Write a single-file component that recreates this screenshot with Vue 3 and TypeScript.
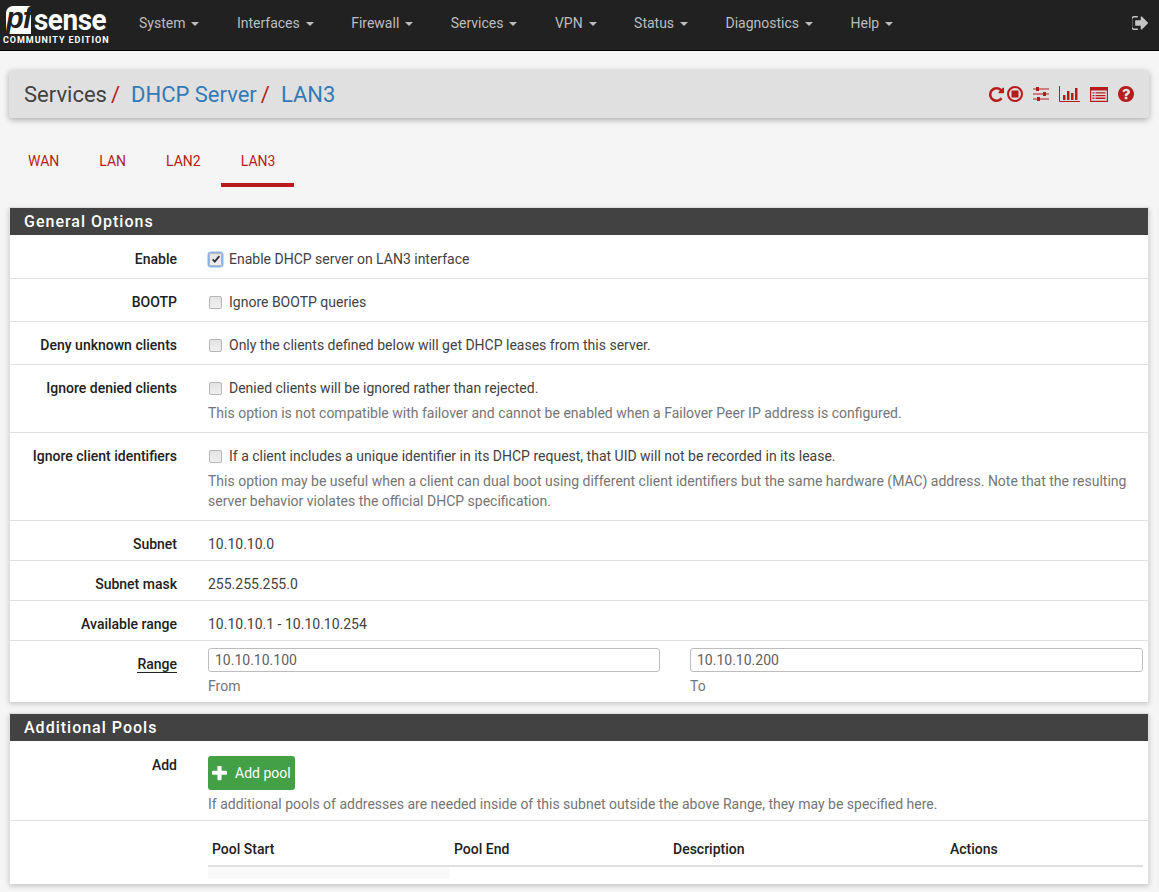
<script setup lang="ts">
const menu = ['System', 'Interfaces', 'Firewall', 'Services', 'VPN', 'Status', 'Diagnostics', 'Help'];
const tabs = ['WAN', 'LAN', 'LAN2', 'LAN3'];

const checks = [
  { label: 'Enable', text: 'Enable DHCP server on LAN3 interface', checked: true, help: '' },
  { label: 'BOOTP', text: 'Ignore BOOTP queries', checked: false, help: '' },
  { label: 'Deny unknown clients', text: 'Only the clients defined below will get DHCP leases from this server.', checked: false, help: '' },
  {
    label: 'Ignore denied clients',
    text: 'Denied clients will be ignored rather than rejected.',
    checked: false,
    help: 'This option is not compatible with failover and cannot be enabled when a Failover Peer IP address is configured.',
  },
  {
    label: 'Ignore client identifiers',
    text: 'If a client includes a unique identifier in its DHCP request, that UID will not be recorded in its lease.',
    checked: false,
    help: 'This option may be useful when a client can dual boot using different client identifiers but the same hardware (MAC) address. Note that the resulting server behavior violates the official DHCP specification.',
  },
];

const statics = [
  { label: 'Subnet', value: '10.10.10.0' },
  { label: 'Subnet mask', value: '255.255.255.0' },
  { label: 'Available range', value: '10.10.10.1 - 10.10.10.254' },
];
</script>

<template>
  <div class="page">
    <nav class="navbar">
      <a class="logo">
        <span class="logo-top"><span class="logo-pf">pf</span><span class="logo-sense">sense</span></span>
        <span class="logo-sub">COMMUNITY EDITION</span>
      </a>
      <ul class="menu">
        <li v-for="item in menu" :key="item">{{ item }}<i class="caret"></i></li>
      </ul>
      <svg class="signout" viewBox="160 256 1472 1280" width="16" height="14">
        <path d="M704 1440q0 4 1 20t.5 26.500-3 23.500-10 19.500-20.500 6.500h-320q-119 0-203.500-84.500t-84.500-203.500v-704q0-119 84.500-203.500t203.500-84.500h320q13 0 22.500 9.500t9.500 22.500q0 4 1 20t.5 26.500-3 23.500-10 19.500-20.500 6.500h-320q-66 0-113 47t-47 113v704q0 66 47 113t113 47h312l11.500 1 11.500 3 8 5.500 7 9 2 13.500zm928-544q0 26-19 45l-544 544q-19 19-45 19t-45-19-19-45v-288h-448q-26 0-45-19t-19-45v-384q0-26 19-45t45-19h448v-288q0-26 19-45t45-19 45 19l544 544q19 19 19 45z" fill="#c4c4c4" />
      </svg>
    </nav>

    <div class="crumbs">
      <h1>
        <span>Services</span><em>/</em><a>DHCP Server</a><em>/</em><a>LAN3</a>
      </h1>
      <div class="tools">
        <svg viewBox="128 128 1536 1536" width="15" height="15">
          <path d="M1664 256v448q0 26-19 45t-45 19h-448q-42 0-59-40-17-39 14-69l138-138q-148-137-349-137-104 0-198.500 40.500t-163.500 109.500-109.500 163.500-40.500 198.500 40.500 198.500 109.500 163.500 163.500 109.500 198.500 40.500q119 0 225-52t179-147q7-10 23-12 15 0 25 9l137 138q9 8 9.500 20.500t-7.500 22.500q-109 132-264 204.500t-327 72.500q-156 0-298-61t-245-164-164-245-61-298 61-298 164-245 245-164 298-61q147 0 284.500 55.500t244.500 156.500l130-129q29-31 70-14 39 17 39 59z" fill="#b71c1c" />
        </svg>
        <svg viewBox="0 0 16 16" width="16" height="16">
          <circle cx="8" cy="8" r="7" fill="none" stroke="#b71c1c" stroke-width="2" />
          <rect x="4.500" y="4.500" width="7" height="7" fill="#b71c1c" />
        </svg>
        <svg class="gap" viewBox="0 0 16 16" width="16" height="16">
          <path d="M0 3h16M0 8h16M0 13h16" stroke="#b71c1c" stroke-width="1.200" />
          <path d="M3 1h3v4H3zM10 6h3v4h-3zM4 11h3v4H4z" fill="#b71c1c" />
        </svg>
        <svg class="gap" viewBox="0 0 21 16" width="21" height="16">
          <path d="M.5 0v15.500H21" fill="none" stroke="#b71c1c" stroke-width="1" />
          <path d="M4 9h2.500v5H4zM8 5h2.500v9H8zM12 7h2.500v7H12zM16 2h2.500v12H16z" fill="#b71c1c" />
        </svg>
        <svg class="gap" viewBox="0 0 18 15" width="18" height="15">
          <path fill-rule="evenodd" d="M0 0h18v15H0zM1.200 3.500v10.300h15.600V3.500z" fill="#b71c1c" />
          <path d="M2.500 5.200h2v1.400h-2zM5.500 5.200h10v1.400h-10zM2.500 7.900h2v1.400h-2zM5.500 7.900h10v1.400h-10zM2.500 10.600h2V12h-2zM5.500 10.600h10V12h-10z" fill="#b71c1c" />
        </svg>
        <svg class="gap" viewBox="128 128 1536 1536" width="16" height="16">
          <path d="M1024 1376v-192q0-14-9-23t-23-9h-192q-14 0-23 9t-9 23v192q0 14 9 23t23 9h192q14 0 23-9t9-23zm256-672q0-88-55.500-163t-138.500-116-170-41q-243 0-371 213-15 24 8 42l132 100q7 6 19 6 16 0 25-12 53-68 86-92 34-24 86-24 48 0 85.500 26t37.500 59q0 38-20 61t-68 45q-63 28-115.500 86.500t-52.500 125.500v36q0 14 9 23t23 9h192q14 0 23-9t9-23q0-19 21.500-49.500t54.500-49.500q32-18 49-28.500t46-35 44.500-48 28-60.500 12.500-81zm384 192q0 209-103 385.500t-279.500 279.500-385.500 103-385.500-103-279.500-279.500-103-385.500 103-385.500 279.500-279.500 385.500-103 385.500 103 279.500 279.500 103 385.500z" fill="#b71c1c" />
        </svg>
      </div>
    </div>

    <ul class="tabs">
      <li v-for="tab in tabs" :key="tab" :class="{ active: tab === 'LAN3' }">{{ tab }}</li>
    </ul>

    <section class="panel">
      <h2>General Options</h2>
      <div v-for="(row, i) in checks" :key="row.label" class="row" :class="{ first: i === 0 }">
        <label class="lbl">{{ row.label }}</label>
        <div class="val">
          <div class="check-line">
            <span class="box" :class="{ on: row.checked }">
              <svg v-if="row.checked" viewBox="0 0 12 12" width="10" height="10">
                <path d="M2 6.500l2.500 2.700L10 2.500" fill="none" stroke="#333" stroke-width="2.200" />
              </svg>
            </span>
            <span>{{ row.text }}</span>
          </div>
          <p v-if="row.help" class="help">{{ row.help }}</p>
        </div>
      </div>
      <div v-for="row in statics" :key="row.label" class="row static">
        <label class="lbl">{{ row.label }}</label>
        <div class="val">{{ row.value }}</div>
      </div>
      <div class="row range">
        <label class="lbl"><span class="uline">Range</span></label>
        <div class="val fields">
          <div>
            <input type="text" value="10.10.10.100" />
            <div class="sub">From</div>
          </div>
          <div>
            <input type="text" value="10.10.10.200" />
            <div class="sub">To</div>
          </div>
        </div>
      </div>
    </section>

    <section class="panel">
      <h2>Additional Pools</h2>
      <div class="row add">
        <label class="lbl">Add</label>
        <div class="val">
          <button class="btn" type="button">
            <svg viewBox="192 192 1408 1408" width="15" height="15">
              <path d="M1600 736v192q0 40-28 68t-68 28h-416v416q0 40-28 68t-68 28h-192q-40 0-68-28t-28-68v-416h-416q-40 0-68-28t-28-68v-192q0-40 28-68t68-28h416v-416q0-40 28-68t68-28h192q40 0 68 28t28 68v416h416q40 0 68 28t28 68z" fill="#fff" />
            </svg>
            Add pool
          </button>
          <p class="help">If additional pools of addresses are needed inside of this subnet outside the above Range, they may be specified here.</p>
        </div>
      </div>
      <div class="row pools">
        <div class="lbl"></div>
        <div class="val">
          <div class="thead">
            <span>Pool Start</span><span>Pool End</span><span>Description</span><span>Actions</span>
          </div>
          <div class="tbody"><span></span></div>
        </div>
      </div>
    </section>
  </div>
</template>

<style>
html, body {
  background: #f5f5f5;
  overflow: hidden;
}
</style>

<style scoped>
.page {
  height: 892px;
  overflow: hidden;
  font-family: Roboto, sans-serif;
  font-size: 14px;
  line-height: 20px;
  color: #424242;
  background: #f5f5f5;
}
.navbar {
  display: flex;
  align-items: center;
  height: 50px;
  background: #212121;
  border-bottom: 1px solid #000;
}
.logo {
  display: flex;
  flex-direction: column;
  align-self: flex-start;
  width: 109px;
  margin-left: 3px;
  color: #fff;
}
.logo-top {
  display: flex;
  align-items: center;
  height: 28px;
  margin-top: 6px;
  padding-left: 3px;
}
.logo-pf {
  width: 29px;
  height: 28px;
  background: #fff;
  color: #212121;
  font: italic 700 29px/25px "Liberation Sans", sans-serif;
  letter-spacing: -1px;
  text-align: center;
  border-radius: 7px 0 0 0;
}
.logo-sense {
  margin-left: 3px;
  font: 700 30px/28px Roboto, sans-serif;
  letter-spacing: -.5px;
  transform: scaleX(.93);
  transform-origin: left center;
}
.logo-sub {
  font: 700 9px/9px Roboto, sans-serif;
  letter-spacing: .95px;
  white-space: nowrap;
  margin-top: 2px;
}
.menu {
  display: flex;
  margin: -4px 0 0 12px;
  padding: 0;
  list-style: none;
  color: #bdbdbd;
}
.menu li {
  padding: 0 15px;
  margin-right: 7.430px;
  white-space: nowrap;
}
.caret {
  display: inline-block;
  margin-left: 6px;
  vertical-align: middle;
  border-top: 4px solid;
  border-left: 4px solid transparent;
  border-right: 4px solid transparent;
}
.signout {
  margin: -5px 11px 0 auto;
}
.crumbs {
  display: flex;
  justify-content: space-between;
  align-items: center;
  height: 48px;
  margin: 19px 10px 0 9px;
  padding: 0 15px;
  background: #e0e0e0;
  border-radius: 3px;
  box-shadow: 0 2px 6px rgba(0, 0, 0, .3);
}
h1 {
  margin: 2px 0 0;
  font-size: 22px;
  font-weight: 400;
  line-height: 26px;
  color: #424242;
}
h1 em {
  font-style: normal;
  color: #b71c1c;
  margin: 0 11px 0 4px;
}
h1 a {
  color: #337ab7;
}
.tools {
  display: flex;
  align-items: center;
  gap: 3px;
}
.tools .gap {
  margin-left: 7px;
}
.tabs {
  display: flex;
  height: 49px;
  margin: 20px 0 20px 9px;
  padding: 0;
  list-style: none;
  color: #b71c1c;
}
.tabs li {
  padding: 15px 19px 0;
  line-height: 17px;
  margin-right: 2px;
}
.tabs li.active {
  margin-left: -1px;
  padding-left: 20px;
  border-bottom: 4px solid #b71c1c;
}
.panel {
  margin: 0 10px 11px 9px;
  background: #fff;
  border: 1px solid #e0e0e0;
  border-bottom: 0;
  box-shadow: 0 2px 5px rgba(0, 0, 0, .2);
}
h2 {
  margin: 0;
  height: 27px;
  padding-left: 14px;
  font-size: 16px;
  font-weight: 500;
  line-height: 28px;
  letter-spacing: 1px;
  color: #fff;
  background: #424242;
}
.row {
  display: grid;
  grid-template-columns: 167px 1fr;
  column-gap: 31px;
  padding: 13px 5px 9px 0;
  border-bottom: 1px solid #e0e0e0;
}
.row.first {
  padding-top: 14px;
}
.row:last-child {
  border-bottom: 0;
}
.lbl {
  font-weight: 500;
  text-align: right;
  color: #212121;
}
.check-line {
  display: flex;
  align-items: center;
  gap: 7px;
  height: 20px;
}
.box {
  display: flex;
  align-items: center;
  justify-content: center;
  width: 13px;
  height: 13px;
  margin-left: 1px;
  box-sizing: border-box;
  background: linear-gradient(#e4e4e4, #efefef);
  border: 1px solid #b5b5b5;
  border-radius: 2px;
}
.box.on {
  box-shadow: 0 0 0 1.500px #8ab4e8;
}
.help {
  margin: 5px 0 0;
  color: #757575;
  line-height: 20px;
}
.static {
  padding: 13px 5px 6px 0;
}
.range {
  padding: 7px 5px 6px 0;
}
.range .lbl {
  padding-top: 6px;
}
.fields {
  display: grid;
  grid-template-columns: 452px 453px;
  column-gap: 30px;
}
input {
  display: block;
  box-sizing: border-box;
  width: 100%;
  height: 24px;
  padding: 0 6px;
  font: inherit;
  color: #616161;
  background: #fff;
  border: 1px solid #bdbdbd;
  border-radius: 3px;
  outline: 0;
}
.sub {
  margin-top: 4px;
  color: #757575;
}
.uline {
  border-bottom: 1px solid #212121;
}
.add {
  padding: 15px 5px 6px 0;
}
.add .lbl {
  margin-top: -1px;
}
.add .help {
  margin-top: 4px;
}
.btn {
  display: flex;
  align-items: center;
  gap: 8px;
  height: 34px;
  padding: 0 4px;
  font: inherit;
  color: #fff;
  background: #43a047;
  border: 0;
  border-radius: 3px;
}
.pools {
  padding: 18px 5px 5px 0;
}
.thead {
  display: grid;
  grid-template-columns: 242px 219px 277px 1fr;
  height: 26px;
  padding-left: 4px;
  font-weight: 500;
  color: #212121;
  border-bottom: 2px solid #e0e0e0;
}
.tbody {
  height: 12px;
}
.tbody span {
  display: block;
  width: 242px;
  height: 12px;
  background: #f9f9f9;
}
</style>
